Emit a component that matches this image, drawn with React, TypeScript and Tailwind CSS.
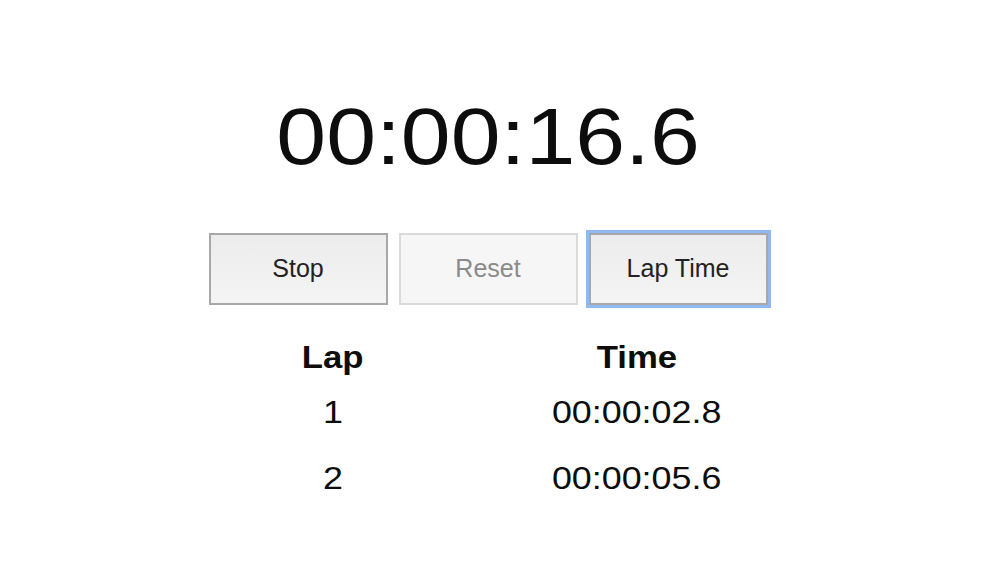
import React from 'react';

const laps = [
  { lap: 1, time: '00:00:02.8' },
  { lap: 2, time: '00:00:05.6' },
];

export default function App() {
  return (
    <div className="min-h-screen bg-white font-['Liberation_Sans',Arial,sans-serif] text-[#0d0d0d]">
      <div className="flex flex-col items-center pr-4 pt-[97px]">
        {/* Elapsed time */}
        <div className="inline-block scale-x-[1.12] text-[80px] leading-none">00:00:16.6</div>

        {/* Controls */}
        <div className="mt-[56px] flex gap-[11px]">
          <button className="h-[72px] w-[179px] border-2 border-[#a8a8a8] bg-gradient-to-b from-[#ececec] to-[#f4f4f4] text-[25px] text-[#222]">
            Stop
          </button>
          <button className="h-[72px] w-[179px] border-2 border-[#dadada] bg-[#f6f6f6] text-[25px] text-[#8a8a8a]">
            Reset
          </button>
          <button className="h-[72px] w-[179px] border-2 border-[#a8a8a8] bg-gradient-to-b from-[#ececec] to-[#f4f4f4] text-[25px] text-[#222] outline outline-[3px] outline-[#92b8f0]">
            Lap Time
          </button>
        </div>

        {/* Laps */}
        <div className="ml-12 mt-[37px] grid w-[608px] grid-cols-[250px_358px] text-[31px] leading-none">
          <div className="h-[54px] text-center font-bold">
            <span className="inline-block scale-x-[1.12]">Lap</span>
          </div>
          <div className="h-[54px] text-center font-bold">
            <span className="inline-block scale-x-[1.12]">Time</span>
          </div>
          {laps.map((l) => (
            <React.Fragment key={l.lap}>
              <div className="h-[66px] text-center text-[32px]">
                <span className="inline-block scale-x-[1.12]">{l.lap}</span>
              </div>
              <div className="h-[66px] text-center text-[32px]">
                <span className="inline-block scale-x-[1.12]">{l.time}</span>
              </div>
            </React.Fragment>
          ))}
        </div>
      </div>
    </div>
  );
}
